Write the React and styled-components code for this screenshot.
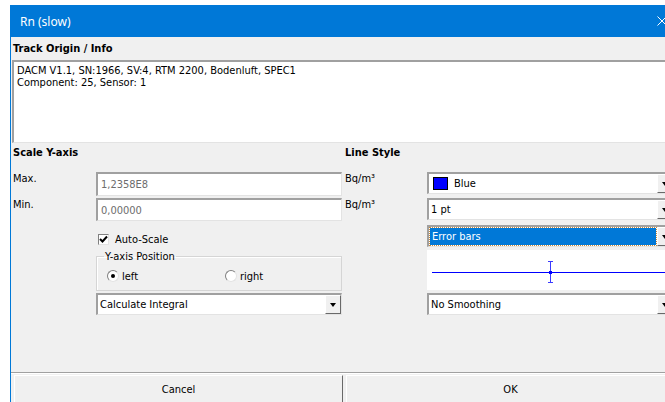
import styled, { createGlobalStyle } from "styled-components";

const GlobalStyle = createGlobalStyle`
  html, body {
    margin: 0;
    padding: 0;
    background: #ffffff;
    overflow: hidden;
  }
`;

const Window = styled.div`
  margin: 5px 0 0 10px;
  width: 666px;
  height: 397px;
  overflow: hidden;
  background: #f0f0f0;
  border-left: 1px solid #0078d7;
  font-family: "DejaVu Sans Condensed", "DejaVu Sans", sans-serif;
  font-size: 11px;
  color: #000;
`;

const TitleBar = styled.div`
  height: 32px;
  background: #0078d7;
  color: #fff;
  font-family: "Noto Sans", "Open Sans", sans-serif;
  font-size: 12px;
  display: flex;
  align-items: center;
  justify-content: space-between;
  padding: 0 10px 0 10px;
  margin-left: -1px;
`;

const CloseIcon = () => (
  <svg width="10" height="10" viewBox="0 0 10 10">
    <path d="M0.5 0.5 L9.5 9.5 M9.5 0.5 L0.5 9.5" stroke="#fff" strokeWidth="1" />
  </svg>
);

const Heading = styled.div`
  font-weight: bold;
  height: ${(p) => p.$h || 23}px;
  padding: ${(p) => p.$pt || 5}px 0 0 ${(p) => p.$pl || 2}px;
  box-sizing: border-box;
  line-height: 13px;
`;

const Sunken = styled.div`
  box-sizing: border-box;
  background: #fff;
  border-top: 2px solid #a0a0a0;
  border-left: 2px solid #a0a0a0;
  border-right: 1px solid #e3e3e3;
  border-bottom: 1px solid #e3e3e3;
`;

const InfoBox = styled(Sunken)`
  margin-left: 1px;
  height: 83px;
  padding: 3px 3px;
  line-height: 12px;
`;

const Form = styled.div`
  display: grid;
  grid-template-columns: 85px 246px 85px 247px;
  grid-template-rows: 29px 26px 27px 25px 43px 22px;
`;

const Label = styled.div`
  padding: ${(p) => (p.$unit ? "0 0 0 3px" : "0 0 0 2px")};
  line-height: 13px;
`;

const TextInput = styled(Sunken)`
  height: ${(p) => p.$h}px;
  padding: 0 3px;
  display: flex;
  align-items: center;
  color: #6d6d6d;
`;

const Combo = styled(Sunken)`
  height: 22px;
  display: flex;
  align-items: stretch;
  padding: 0;
`;

const ComboText = styled.div`
  flex: 1;
  display: flex;
  align-items: center;
  gap: 6px;
  padding-left: 2px;
  margin: ${(p) => (p.$selected ? "1px" : "0")};
  background: ${(p) => (p.$selected ? "#0078d7" : "transparent")};
  color: ${(p) => (p.$selected ? "#fff" : "#000")};
  outline: ${(p) => (p.$selected ? "1px dotted #c98a3a" : "none")};
`;

const Swatch = styled.span`
  width: 15px;
  height: 13px;
  box-sizing: border-box;
  margin-left: 2px;
  background: #0000ff;
  border: 1px solid #000;
`;

const ArrowButton = styled.div`
  width: 16px;
  flex: none;
  box-sizing: border-box;
  background: #f0f0f0;
  border-top: 1px solid #fff;
  border-left: 1px solid #fff;
  border-right: 1px solid #696969;
  border-bottom: 1px solid #696969;
  display: flex;
  align-items: center;
  justify-content: center;
  &::after {
    content: "";
    border-left: 3.5px solid transparent;
    border-right: 3.5px solid transparent;
    border-top: 4px solid #000;
  }
`;

const Dropdown = ({ children, selected, swatch }) => (
  <Combo>
    <ComboText $selected={selected}>
      {swatch && <Swatch />}
      {children}
    </ComboText>
    <ArrowButton />
  </Combo>
);

const CheckRow = styled.div`
  display: flex;
  align-items: center;
  gap: 6px;
  padding: 8px 0 0 2px;
  align-self: start;
`;

const CheckBox = styled.span`
  width: 11px;
  height: 11px;
  box-sizing: border-box;
  background: #fff;
  border-top: 1px solid #808080;
  border-left: 1px solid #808080;
  border-right: 1px solid #e3e3e3;
  border-bottom: 1px solid #e3e3e3;
  display: flex;
  align-items: center;
  justify-content: center;
`;

const GroupBox = styled.fieldset`
  margin: 1px 0 2px 0;
  padding: 0 0 0 10px;
  border: 1px solid #d5d5d5;
  box-shadow: inset 1px 1px 0 #fff;
  display: flex;
  align-items: center;
  legend {
    padding: 0 1px;
    margin-left: -3px;
    line-height: 11px;
  }
`;

const Radio = styled.label`
  display: flex;
  align-items: center;
  gap: 3px;
  width: ${(p) => p.$w}px;
  margin-top: 0;
`;

const RadioDot = styled.span`
  width: 12px;
  height: 12px;
  box-sizing: border-box;
  border-radius: 50%;
  background: #fff;
  border: 1px solid;
  border-color: #808080 #e3e3e3 #e3e3e3 #808080;
  display: flex;
  align-items: center;
  justify-content: center;
  &::after {
    content: "";
    width: 4px;
    height: 4px;
    border-radius: 50%;
    background: ${(p) => (p.$on ? "#000" : "transparent")};
  }
`;

const Preview = styled.div`
  background: #fff;
  height: 40px;
`;

const Footer = styled.div`
  margin-top: 57px;
  border-top: 1px solid #a0a0a0;
  box-shadow: inset 0 1px 0 #fff;
  padding: 2px 2px 0 3px;
  display: flex;
  gap: 3px;
`;

const Button = styled.div`
  flex: 1;
  height: 30px;
  box-sizing: border-box;
  background: #f0f0f0;
  border-top: 1px solid #fff;
  border-left: 1px solid #fff;
  border-right: 1px solid #696969;
  border-bottom: 1px solid #696969;
  display: flex;
  align-items: center;
  justify-content: center;
  padding-bottom: 2px;
`;

export default function App() {
  return (
    <>
      <GlobalStyle />
      <Window>
        <TitleBar>
          <span>Rn (slow)</span>
          <CloseIcon />
        </TitleBar>
        <Heading>Track Origin / Info</Heading>
        <InfoBox>
          DACM V1.1, SN:1966, SV:4, RTM 2200, Bodenluft, SPEC1
          <br />
          Component: 25, Sensor: 1
        </InfoBox>
        <Form>
          <Heading $h={29} $pt={3} style={{ gridColumn: "1 / 3" }}>
            Scale Y-axis
          </Heading>
          <Heading $h={29} $pt={3} $pl={3} style={{ gridColumn: "3 / 5" }}>
            Line Style
          </Heading>

          <Label>Max.</Label>
          <TextInput $h={24}>1,2358E8</TextInput>
          <Label $unit>Bq/m³</Label>
          <Dropdown swatch>Blue</Dropdown>

          <Label>Min.</Label>
          <TextInput $h={23}>0,00000</TextInput>
          <Label $unit>Bq/m³</Label>
          <Dropdown>1 pt</Dropdown>

          <div />
          <CheckRow>
            <CheckBox>
              <svg width="9" height="9" viewBox="0 0 9 9">
                <path d="M1 4 L3.5 6.5 L8 1.5" stroke="#000" strokeWidth="2" fill="none" />
              </svg>
            </CheckBox>
            Auto-Scale
          </CheckRow>
          <div />
          <Dropdown selected>Error bars</Dropdown>

          <div />
          <GroupBox>
            <legend>Y-axis Position</legend>
            <Radio $w={118}>
              <RadioDot $on />
              left
            </Radio>
            <Radio $w={80}>
              <RadioDot />
              right
            </Radio>
          </GroupBox>
          <div />
          <Preview>
            <svg width="247" height="40" viewBox="0 0 247 40">
              <line x1="5" y1="22.5" x2="247" y2="22.5" stroke="#0000ff" strokeWidth="1" />
              <line x1="123.5" y1="11" x2="123.5" y2="33" stroke="#3a3aff" strokeWidth="1" />
              <line x1="121" y1="11.5" x2="126" y2="11.5" stroke="#3a3aff" strokeWidth="1" />
              <line x1="121" y1="32.5" x2="126" y2="32.5" stroke="#3a3aff" strokeWidth="1" />
              <rect x="122" y="21" width="3" height="3" fill="#0000ff" />
            </svg>
          </Preview>

          <div />
          <Dropdown>Calculate Integral</Dropdown>
          <div />
          <Dropdown>No Smoothing</Dropdown>
        </Form>
        <Footer>
          <Button>Cancel</Button>
          <Button>OK</Button>
        </Footer>
      </Window>
    </>
  );
}
